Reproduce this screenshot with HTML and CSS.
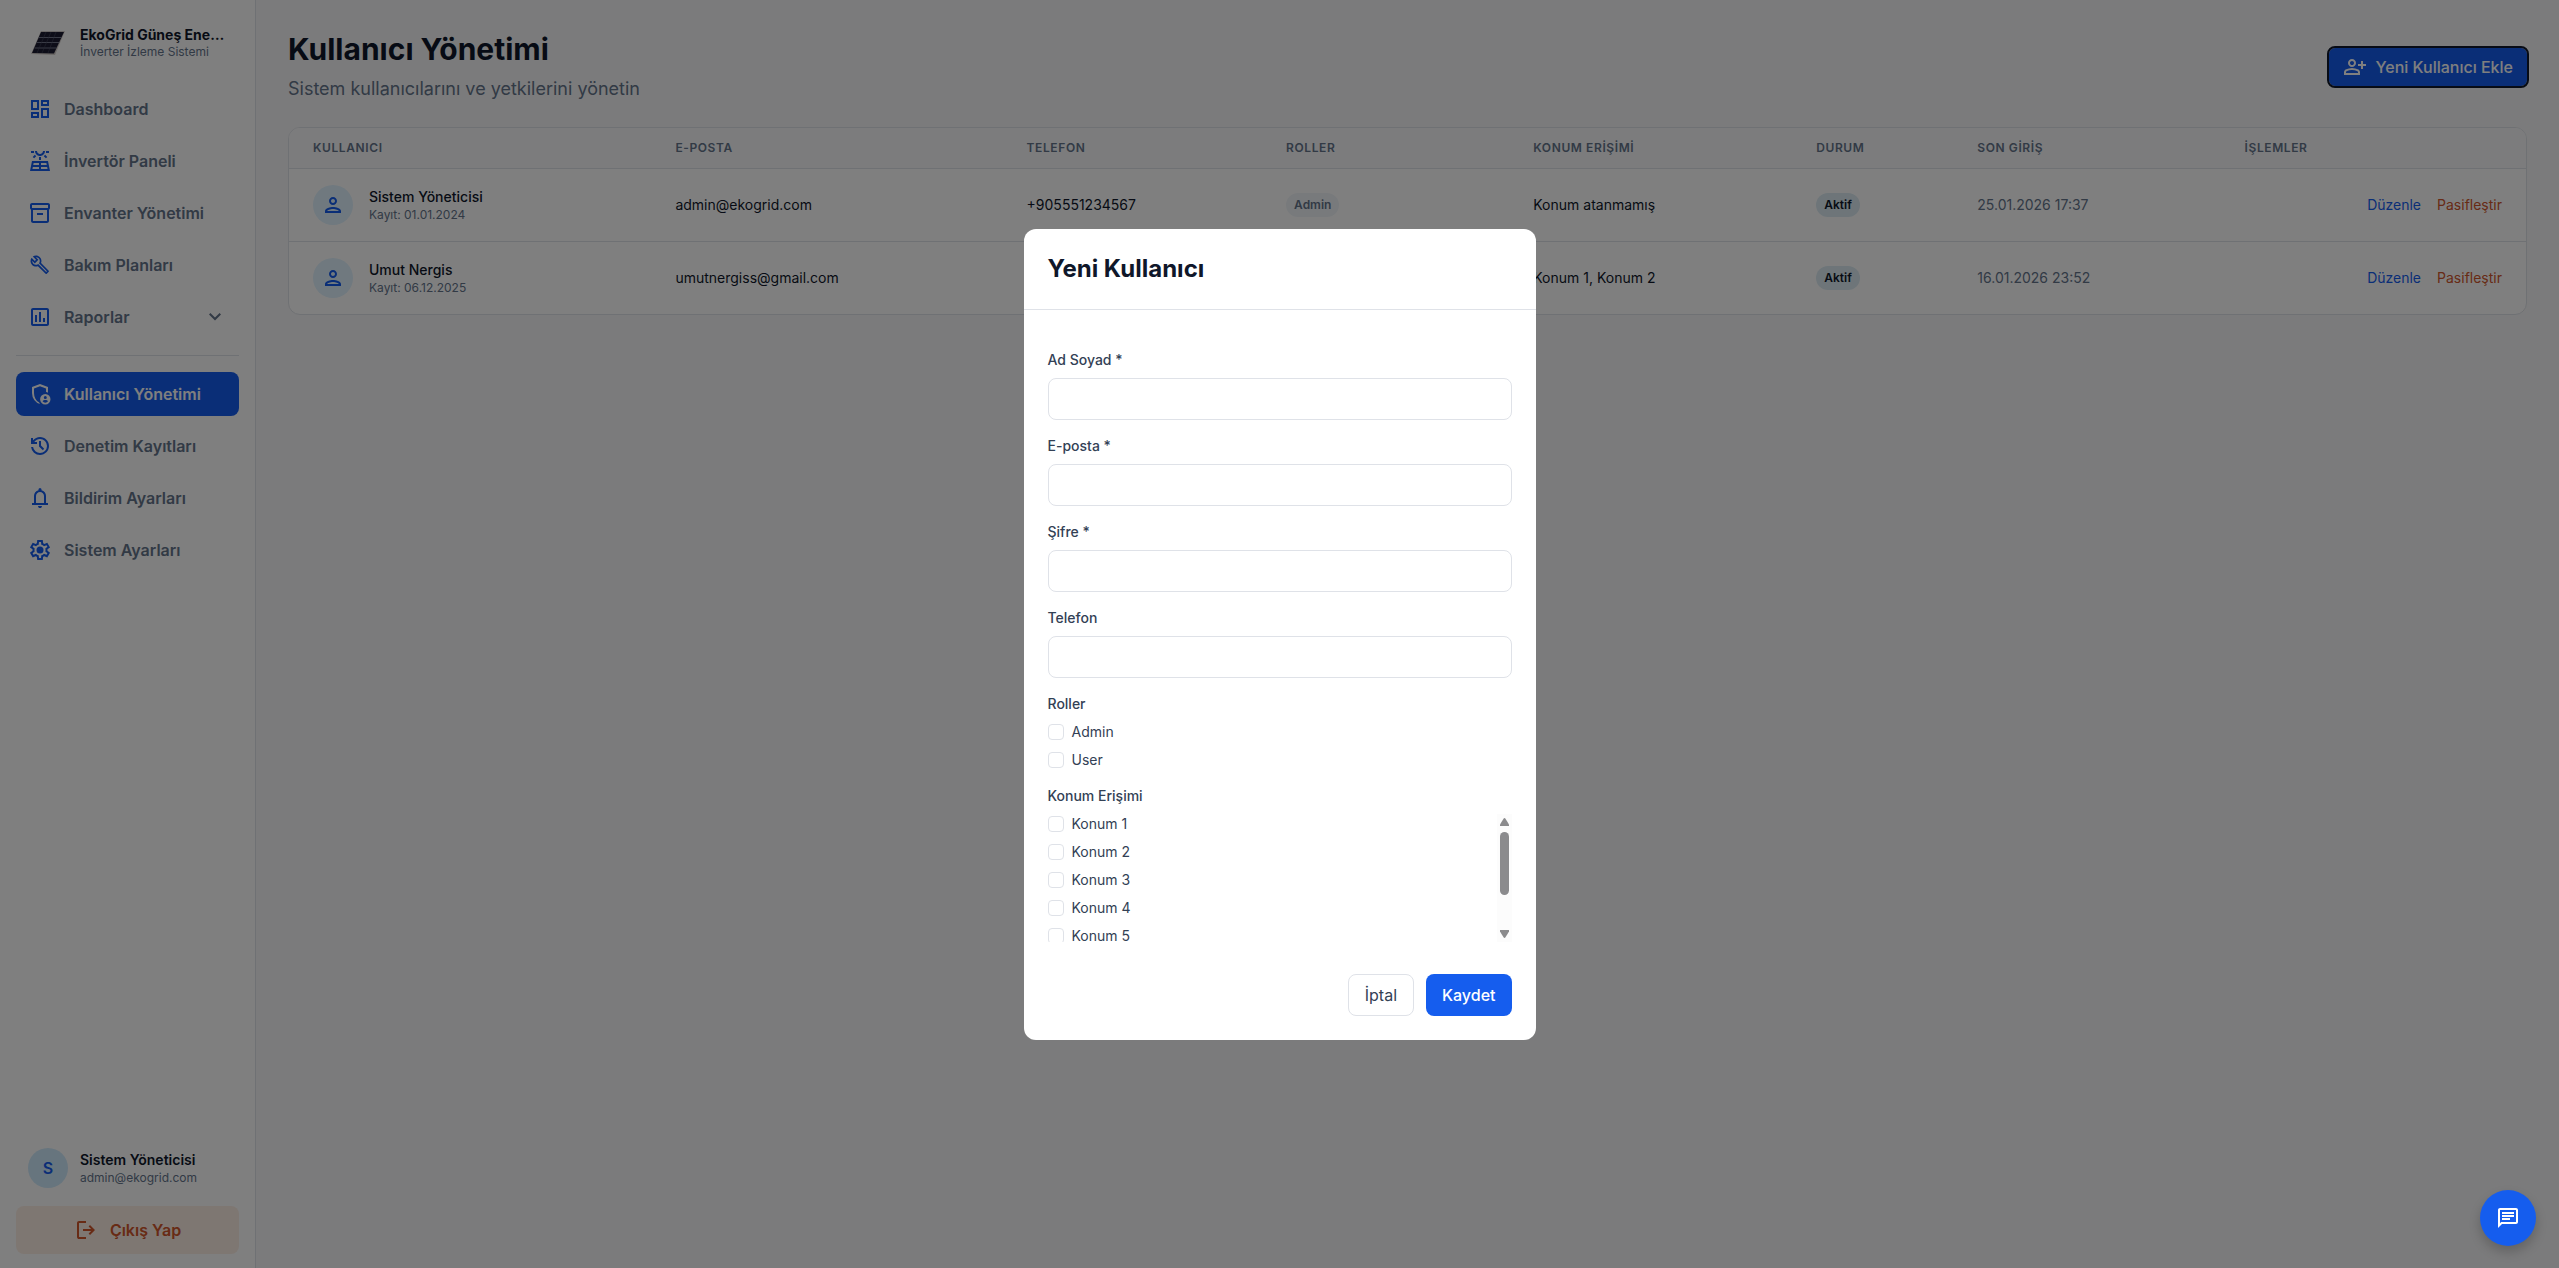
FILE: index.html
```html
<!DOCTYPE html>
<html lang="tr">
<head>
<meta charset="utf-8">
<meta name="viewport" content="width=device-width, initial-scale=1">
<title>Kullanıcı Yönetimi</title>
<link rel="stylesheet" href="styles.css">
</head>
<body>
<div class="app">
  <aside class="sidebar">
    <div class="brand">
      <svg class="brand-logo" viewBox="0 0 40 40" aria-hidden="true">
        <path d="M13 8h24L27 32 3 31z" fill="#d3cdca"/>
        <path d="M13 9h23L26 30.500 4 30z" fill="#1b1b30"/>
        <path d="M10.500 14.500h23M8.500 19.500h23M6.500 25h22" stroke="#8a8fa3" stroke-width=".8" fill="none"/>
        <path d="M18 9l-9 21M23 9l-9 21M28 9l-8 21" stroke="#4a4e66" stroke-width=".5" fill="none"/>
      </svg>
      <div class="brand-text">
        <div class="brand-name">EkoGrid Güneş Enerjisi</div>
        <div class="brand-sub">İnverter İzleme Sistemi</div>
      </div>
    </div>
    <nav class="nav">
      <a class="nav-item" href="#"><svg class="icon" viewBox="0 0 24 24"><path d="M19 5v2h-4V5h4M9 5v6H5V5h4m10 8v6h-4v-6h4M9 17v2H5v-2h4M21 3h-8v6h8V3zM11 3H3v10h8V3zm10 8h-8v10h8V11zm-10 4H3v6h8v-6z"/></svg>Dashboard</a>
      <a class="nav-item" href="#"><svg class="icon" viewBox="0 0 24 24"><path fill-rule="evenodd" d="M20 12H4L2 22h20L20 12zM18.360 14l.4 2H13v-2H18.360zM11 14v2H5.240l.4-2H11zM4.840 18H11v2H4.440L4.840 18zM13 20v-2h6.160l.4 2H13zM11 8h2v3h-2zM15.760 7.210l1.410-1.410 2.120 2.120-1.410 1.410zM4.710 7.920 6.830 5.800l1.410 1.410-2.120 2.120zM3 2h3v2H3zM18 2h3v2h-3zM12 7c2.760 0 5-2.240 5-5h-2c0 1.650-1.350 3-3 3S9 3.650 9 2H7C7 4.760 9.240 7 12 7z"/></svg>İnvertör Paneli</a>
      <a class="nav-item" href="#"><svg class="icon" viewBox="0 0 24 24"><path d="M20 2H4c-1 0-2 .9-2 2v3.010c0 .72.43 1.340 1 1.690V20c0 1.100 1.100 2 2 2h14c.9 0 2-.9 2-2V8.700c.57-.35 1-.97 1-1.690V4c0-1.100-1-2-2-2zm-1 18H5V9h14v11zm1-13H4V4h16v3zM9 12h6v2H9z"/></svg>Envanter Yönetimi</a>
      <a class="nav-item" href="#"><svg class="icon" viewBox="-2 -2 28.500 28.500"><path d="M22.610 18.990l-9.080-9.080c.93-2.340.45-5.100-1.440-7C9.790.61 6.210.4 3.660 2.260L7.500 6.110 6.080 7.520 2.250 3.690C.39 6.230.6 9.820 2.900 12.110c1.860 1.860 4.570 2.350 6.890 1.480l9.110 9.110c.39.39 1.020.39 1.410 0l2.300-2.300c.4-.38.4-1.010 0-1.410zm-3 1.600l-9.460-9.460c-.61.45-1.290.72-2 .82-1.360.2-2.790-.21-3.830-1.250C3.370 9.760 2.930 8.500 3 7.260l3.090 3.090 4.240-4.240-3.090-3.090c1.240-.07 2.490.37 3.440 1.310 1.080 1.080 1.490 2.570 1.240 3.960-.12.71-.42 1.370-.88 1.960l9.450 9.450-.88.89z"/></svg>Bakım Planları</a>
      <a class="nav-item" href="#"><svg class="icon" viewBox="0 0 24 24"><path d="M19 3H5c-1.100 0-2 .9-2 2v14c0 1.100.9 2 2 2h14c1.100 0 2-.9 2-2V5c0-1.100-.9-2-2-2zm0 16H5V5h14v14zM7 10h2v7H7zm4-3h2v10h-2zm4 6h2v4h-2z"/></svg>Raporlar<svg class="icon chevron" viewBox="0 0 24 24"><path d="M12 15.400l-6-6L7.400 8l4.600 4.600L16.600 8 18 9.400z"/></svg></a>
      <hr class="nav-divider">
      <a class="nav-item active" href="#" aria-current="page"><svg class="icon" viewBox="0 0 24 24"><path d="M12 22q-3.475-.875-5.738-3.988T4 11.100V5l8-3 8 3v5.700q-.9-.5-2-.65V6.400l-6-2.250L6 6.400v4.700q0 2.650 1.300 5.400T11 20.300q.3.850 1 1.700z"/><path fill-rule="evenodd" d="M17.300 12a5.200 5.200 0 1 0 0 10.400 5.200 5.200 0 0 0 0-10.400zm0 2a1.500 1.500 0 1 1 0 3 1.500 1.500 0 0 1 0-3zm0 6.700c-1.100 0-2.100-.5-2.700-1.400.1-.8 1.800-1.300 2.700-1.300s2.600.5 2.700 1.300c-.6.9-1.600 1.400-2.700 1.400z"/></svg>Kullanıcı Yönetimi</a>
      <a class="nav-item" href="#"><svg class="icon" viewBox="0 0 24 24"><path d="M12 21q-3.450 0-6.012-2.288T3.050 13H5.100q.35 2.600 2.313 4.300T12 19q2.925 0 4.963-2.037T19 12t-2.037-4.962T12 5q-1.725 0-3.225.8T6.250 8H9v2H3V4h2v2.350q1.275-1.600 3.113-2.475T12 3q1.875 0 3.513.713t2.850 1.924 1.925 2.850T21 12t-.712 3.513-1.925 2.850-2.850 1.925T12 21m2.800-4.800L11 12.400V7h2v4.600l3.200 3.200z"/></svg>Denetim Kayıtları</a>
      <a class="nav-item" href="#"><svg class="icon" viewBox="0 0 24 24"><path d="M4 19v-2h2v-7q0-2.075 1.250-3.687T10.500 4.200v-.7q0-.625.438-1.062T12 2t1.063.438T13.500 3.500v.7q2 .5 3.250 2.113T18 10v7h2v2zm8 3q-.825 0-1.412-.587T10 20h4q0 .825-.587 1.413T12 22m-4-5h8v-7q0-1.650-1.175-2.825T12 6 9.175 7.175 8 10z"/></svg>Bildirim Ayarları</a>
      <a class="nav-item" href="#"><svg class="icon" viewBox="0 0 24 24"><path d="m9.250 22-.4-3.200q-.325-.125-.612-.3t-.563-.375L4.700 19.375l-2.750-4.750 2.575-1.950Q4.500 12.500 4.500 12.338v-.675q0-.163.025-.338L1.950 9.375l2.750-4.750 2.975 1.250q.275-.2.575-.375t.6-.3l.4-3.200h5.500l.4 3.200q.325.125.613.3t.562.375l2.975-1.250 2.750 4.750-2.575 1.950q.025.175.025.338v.674q0 .163-.05.338l2.575 1.950-2.750 4.750-2.950-1.250q-.275.2-.575.375t-.6.3l-.4 3.200zM11 20h1.975l.35-2.650q.775-.2 1.438-.587t1.212-.938l2.475 1.025.975-1.700-2.150-1.625q.125-.35.175-.737T17.500 12t-.05-.787-.175-.738l2.150-1.625-.975-1.700-2.475 1.050q-.55-.575-1.212-.962t-1.438-.588L13 4h-1.975l-.35 2.650q-.775.2-1.437.588t-1.213.937L5.550 7.150l-.975 1.700 2.150 1.600q-.125.375-.175.75t-.05.8q0 .4.05.775t.175.75l-2.150 1.625.975 1.700 2.475-1.050q.55.575 1.213.963t1.437.587z"/><circle cx="12" cy="12" r="3.500"/></svg>Sistem Ayarları</a>
    </nav>
    <div class="account">
      <div class="account-row">
        <span class="initial">S</span>
        <div>
          <div class="account-name">Sistem Yöneticisi</div>
          <div class="account-mail">admin@ekogrid.com</div>
        </div>
      </div>
      <button class="logout" type="button"><svg class="icon" viewBox="0 0 24 24"><path d="M5 21q-.825 0-1.412-.587T3 19V5q0-.825.588-1.412T5 3h7v2H5v14h7v2zm11-4-1.375-1.450 2.550-2.550H9v-2h8.175l-2.550-2.550L16 7l5 5z"/></svg>Çıkış Yap</button>
    </div>
  </aside>

  <main class="main">
    <header class="page-head">
      <div>
        <h1 class="page-title">Kullanıcı Yönetimi</h1>
        <p class="page-sub">Sistem kullanıcılarını ve yetkilerini yönetin</p>
      </div>
      <button class="add-user" type="button"><svg class="icon" viewBox="0 0 24 24"><path d="M18 14v-3h-3V9h3V6h2v3h3v2h-3v3zm-9-2q-1.650 0-2.825-1.175T5 8t1.175-2.825T9 4t2.825 1.175T13 8t-1.175 2.825T9 12m-8 8v-2.800q0-.85.438-1.562T2.600 14.550q1.550-.775 3.150-1.162T9 13t3.250.388 3.150 1.162q.725.375 1.163 1.088T17 17.200V20zm2-2h12v-.8q0-.275-.137-.5t-.363-.35q-1.350-.675-2.725-1.012T9 15t-2.775.338T3.500 16.350q-.225.125-.363.35T3 17.200zm6-8q.825 0 1.413-.587T11 8t-.587-1.412T9 6t-1.412.588T7 8t.588 1.413T9 10"/></svg>Yeni Kullanıcı Ekle</button>
    </header>
    <div class="card">
      <table class="users">
        <colgroup>
          <col class="c-user"><col class="c-mail"><col class="c-phone"><col class="c-roles"><col class="c-place"><col class="c-state"><col class="c-login"><col class="c-actions">
        </colgroup>
        <thead>
          <tr><th>Kullanıcı</th><th>E-posta</th><th>Telefon</th><th>Roller</th><th>Konum Erişimi</th><th>Durum</th><th>Son Giriş</th><th>İşlemler</th></tr>
        </thead>
        <tbody>
          <tr>
            <td><div class="user"><span class="avatar"><svg class="icon" viewBox="0 0 24 24"><path d="M12 6c1.100 0 2 .9 2 2s-.9 2-2 2-2-.9-2-2 .9-2 2-2m0 10c2.700 0 5.800 1.290 6 2H6c.23-.72 3.310-2 6-2m0-12C9.790 4 8 5.790 8 8s1.790 4 4 4 4-1.790 4-4-1.790-4-4-4zm0 10c-2.670 0-8 1.340-8 4v2h16v-2c0-2.660-5.330-4-8-4z"/></svg></span><div><div class="user-name">Sistem Yöneticisi</div><div class="user-date">Kayıt: 01.01.2024</div></div></div></td>
            <td>admin@ekogrid.com</td>
            <td>+905551234567</td>
            <td><span class="badge">Admin</span></td>
            <td>Konum atanmamış</td>
            <td><span class="badge badge-on">Aktif</span></td>
            <td class="muted">25.01.2026 17:37</td>
            <td><div class="actions"><button class="link edit" type="button">Düzenle</button><button class="link off" type="button">Pasifleştir</button></div></td>
          </tr>
          <tr>
            <td><div class="user"><span class="avatar"><svg class="icon" viewBox="0 0 24 24"><path d="M12 6c1.100 0 2 .9 2 2s-.9 2-2 2-2-.9-2-2 .9-2 2-2m0 10c2.700 0 5.800 1.290 6 2H6c.23-.72 3.310-2 6-2m0-12C9.790 4 8 5.790 8 8s1.790 4 4 4 4-1.790 4-4-1.790-4-4-4zm0 10c-2.670 0-8 1.340-8 4v2h16v-2c0-2.660-5.330-4-8-4z"/></svg></span><div><div class="user-name">Umut Nergis</div><div class="user-date">Kayıt: 06.12.2025</div></div></div></td>
            <td>umutnergiss@gmail.com</td>
            <td></td>
            <td></td>
            <td>Konum 1, Konum 2</td>
            <td><span class="badge badge-on">Aktif</span></td>
            <td class="muted">16.01.2026 23:52</td>
            <td><div class="actions"><button class="link edit" type="button">Düzenle</button><button class="link off" type="button">Pasifleştir</button></div></td>
          </tr>
        </tbody>
      </table>
    </div>
  </main>
</div>

<div class="overlay">
  <div class="modal" role="dialog" aria-modal="true" aria-labelledby="modal-title">
    <h2 class="modal-title" id="modal-title">Yeni Kullanıcı</h2>
    <form class="form">
      <div class="field"><label for="full-name">Ad Soyad *</label><input class="text" id="full-name" type="text"></div>
      <div class="field"><label for="email">E-posta *</label><input class="text" id="email" type="email"></div>
      <div class="field"><label for="password">Şifre *</label><input class="text" id="password" type="password"></div>
      <div class="field"><label for="phone">Telefon</label><input class="text" id="phone" type="tel"></div>
      <fieldset class="field">
        <legend>Roller</legend>
        <div class="checks">
          <label class="check"><input type="checkbox">Admin</label>
          <label class="check"><input type="checkbox">User</label>
        </div>
      </fieldset>
      <fieldset class="field">
        <legend>Konum Erişimi</legend>
        <div class="scroll-box">
          <div class="checks scroll">
            <label class="check"><input type="checkbox">Konum 1</label>
            <label class="check"><input type="checkbox">Konum 2</label>
            <label class="check"><input type="checkbox">Konum 3</label>
            <label class="check"><input type="checkbox">Konum 4</label>
            <label class="check"><input type="checkbox">Konum 5</label>
          </div>
          <div class="rail" aria-hidden="true">
            <svg class="rail-arrow" viewBox="0 0 9 8"><path d="M4.500 0Q5 0 5.500.7L9 6.500V8H0V6.500L3.500.7Q4 0 4.500 0z"/></svg>
            <span class="rail-track"><span class="rail-thumb"></span></span>
            <svg class="rail-arrow" viewBox="0 0 9 8"><path d="M4.500 8Q5 8 5.500 7.300L9 1.500V0H0v1.500l3.500 5.800Q4 8 4.500 8z"/></svg>
          </div>
        </div>
      </fieldset>
      <div class="form-actions">
        <button class="btn" type="button">İptal</button>
        <button class="btn btn-primary" type="submit">Kaydet</button>
      </div>
    </form>
  </div>
</div>

<button class="chat" type="button" aria-label="Sohbet"><svg class="icon" viewBox="0 0 24 24"><path d="M4 4h16v12H5.170L4 17.170V4m0-2c-1.100 0-1.990.9-1.990 2L2 22l4-4h14c1.100 0 2-.9 2-2V4c0-1.100-.9-2-2-2H4zm2 10h8v2H6v-2zm0-3h12v2H6V9zm0-3h12v2H6V6z"/></svg></button>
</body>
</html>
```
FILE: styles.css
```css
:root {
  --blue: #155dee;
  --ink: #0f172a;
  --slate: #334155;
  --muted: #64748b;
  --line: #dfe2e8;
  --orange: #d0562b;
  --sky: #e0f2fe;
}

* { box-sizing: border-box; }

body {
  margin: 0;
  background: #f7f7f8;
  color: var(--ink);
  font-family: Inter, "Liberation Sans", sans-serif;
  font-size: 14px;
  line-height: 20px;
}

button { font: inherit; border: 0; cursor: pointer; }

.icon { width: 24px; height: 24px; flex: none; fill: currentColor; }

.app { display: flex; min-height: 100vh; }

/* Sidebar */
.sidebar {
  display: flex;
  flex-direction: column;
  gap: 24px;
  flex: none;
  width: 256px;
  padding: 23px 16px 14px;
  background: #fff;
  border-right: 1px solid var(--line);
}

.brand { display: flex; align-items: center; gap: 12px; padding: 0 12px; }
.brand-logo { width: 40px; height: 40px; flex: none; }
.brand-text { min-width: 0; }
.brand-name {
  overflow: hidden;
  font-weight: 700;
  line-height: 18px;
  text-overflow: ellipsis;
  white-space: nowrap;
}
.brand-sub { color: var(--muted); font-size: 12px; line-height: 16px; white-space: nowrap; }

.nav { display: flex; flex-direction: column; gap: 8px; flex: 1; }
.nav-item {
  display: flex;
  align-items: center;
  gap: 12px;
  height: 44px;
  padding: 0 12px;
  border-radius: 8px;
  color: var(--muted);
  font-size: 16px;
  font-weight: 600;
  text-decoration: none;
}
.nav-item .icon { color: var(--blue); }
.nav-item .chevron { margin-left: auto; color: var(--muted); }
.nav-item.active { background: var(--blue); color: #fff; }
.nav-item.active .icon { color: #fff; }
.nav-divider { width: 100%; margin: 8px 0; border: 0; border-top: 1px solid var(--line); }

.account { display: flex; flex-direction: column; gap: 18px; }
.account-row { display: flex; align-items: center; gap: 12px; padding: 0 12px; }
.initial, .avatar {
  display: grid;
  place-items: center;
  flex: none;
  width: 40px;
  height: 40px;
  border-radius: 50%;
  background: var(--sky);
  color: var(--blue);
}
.initial { background: #cfeafc; font-weight: 600; font-size: 16px; }
.account-name { font-weight: 600; }
.account-mail { color: var(--muted); font-size: 12px; line-height: 16px; }
.logout {
  display: flex;
  align-items: center;
  justify-content: center;
  gap: 12px;
  height: 48px;
  border-radius: 8px;
  background: #fdeee5;
  color: var(--orange);
  font-size: 16px;
  font-weight: 600;
}

/* Page */
.main { flex: 1; min-width: 0; padding: 31px 32px 32px; }
.page-head {
  display: flex;
  align-items: center;
  justify-content: space-between;
  margin-bottom: 25px;
}
.page-title { margin: 0 0 8px; font-size: 30px; font-weight: 700; line-height: 36px; }
.page-sub { margin: 0; color: var(--muted); font-size: 18px; line-height: 27px; }
.add-user {
  display: flex;
  align-items: center;
  gap: 8px;
  height: 38px;
  padding: 0 14px;
  border-radius: 6px;
  outline: 2px solid var(--ink);
  background: var(--blue);
  color: #fff;
  font-size: 16px;
  font-weight: 500;
}

.card {
  overflow: hidden;
  border: 1px solid var(--line);
  border-radius: 12px;
  background: #fff;
}
.users { width: 100%; border-collapse: separate; border-spacing: 0; table-layout: fixed; }
.c-user { width: 16.200%; }
.c-mail { width: 15.700%; }
.c-phone { width: 11.600%; }
.c-roles { width: 11.050%; }
.c-place { width: 12.650%; }
.c-state { width: 7.200%; }
.c-login { width: 11.950%; }
.c-actions { width: 13.650%; }
.users th {
  height: 41px;
  padding: 0 24px;
  border-bottom: 1px solid var(--line);
  background: #f8f9fb;
  color: var(--muted);
  font-size: 12px;
  font-weight: 600;
  letter-spacing: 0.05em;
  text-align: left;
  text-transform: uppercase;
}
.users td { height: 73px; padding: 0 24px; border-bottom: 1px solid var(--line); }
.users tbody tr:last-child td { height: 72px; border-bottom: 0; }
.users .muted { color: var(--muted); }
.user { display: flex; align-items: center; gap: 16px; }
.user-name { font-weight: 500; }
.user-date { color: var(--muted); font-size: 12px; line-height: 16px; }
.badge {
  display: inline-block;
  padding: 4px 8px;
  border-radius: 12px;
  background: #f1f5f9;
  color: var(--muted);
  font-size: 12px;
  font-weight: 600;
  line-height: 16px;
}
.badge-on { background: #dcebf3; color: var(--ink); }
.actions { display: flex; justify-content: flex-end; gap: 16px; }
.link { padding: 0; background: none; }
.edit { color: var(--blue); }
.off { color: var(--orange); }

/* Dialog */
.overlay {
  position: fixed;
  inset: 0;
  display: grid;
  place-items: center;
  background: rgba(0, 0, 0, 0.5);
}
.modal {
  width: 100%;
  max-width: 512px;
  border-radius: 12px;
  background: #fff;
}
.modal-title {
  margin: 0;
  padding: 24px;
  border-bottom: 1px solid var(--line);
  font-size: 24px;
  font-weight: 700;
  line-height: 32px;
}
.form { display: flex; flex-direction: column; gap: 16px; padding: 40px 24px 24px; color: var(--slate); }
.field {
  display: flex;
  flex-direction: column;
  gap: 8px;
  min-width: 0;
  margin: 0;
  padding: 0;
  border: 0;
  font-weight: 500;
}
.field legend { margin-bottom: 8px; padding: 0; }
.text {
  width: 100%;
  height: 42px;
  padding: 8px 12px;
  border: 1px solid var(--line);
  border-radius: 8px;
  background: #fff;
  color: var(--ink);
  font: inherit;
}
.checks { display: flex; flex-direction: column; gap: 8px; }
.check { display: flex; align-items: center; gap: 8px; flex: none; font-weight: 400; }
.check input {
  appearance: none;
  width: 16px;
  height: 16px;
  margin: 0;
  border: 1px solid var(--line);
  border-radius: 4px;
  background: #fff;
}
.scroll-box { display: flex; height: 128px; }
.scroll { flex: 1; overflow-y: auto; scrollbar-width: none; }
.rail {
  display: flex;
  flex-direction: column;
  align-items: center;
  gap: 6px;
  width: 15px;
  padding: 4px 0;
  background: #fcfcfc;
}
.rail-arrow { width: 9px; height: 8px; flex: none; fill: #8b8b8d; }
.rail-track { flex: 1; }
.rail-thumb { display: block; width: 9px; height: 63px; border-radius: 5px; background: #8b8b8d; }
.form-actions { display: flex; justify-content: flex-end; gap: 12px; padding-top: 16px; }
.btn {
  padding: 8px 16px;
  border: 1px solid var(--line);
  border-radius: 8px;
  background: #fff;
  color: var(--slate);
  font-size: 16px;
  line-height: 24px;
}
.btn-primary { padding: 9px 16px; border: 0; background: var(--blue); color: #fff; font-weight: 500; }

/* Chat launcher */
.chat {
  position: fixed;
  right: 23px;
  bottom: 22px;
  display: grid;
  place-items: center;
  width: 56px;
  height: 56px;
  padding: 0;
  border-radius: 50%;
  background: var(--blue);
  color: #fff;
  box-shadow: 0 6px 12px rgba(0, 0, 0, 0.2);
}
```
